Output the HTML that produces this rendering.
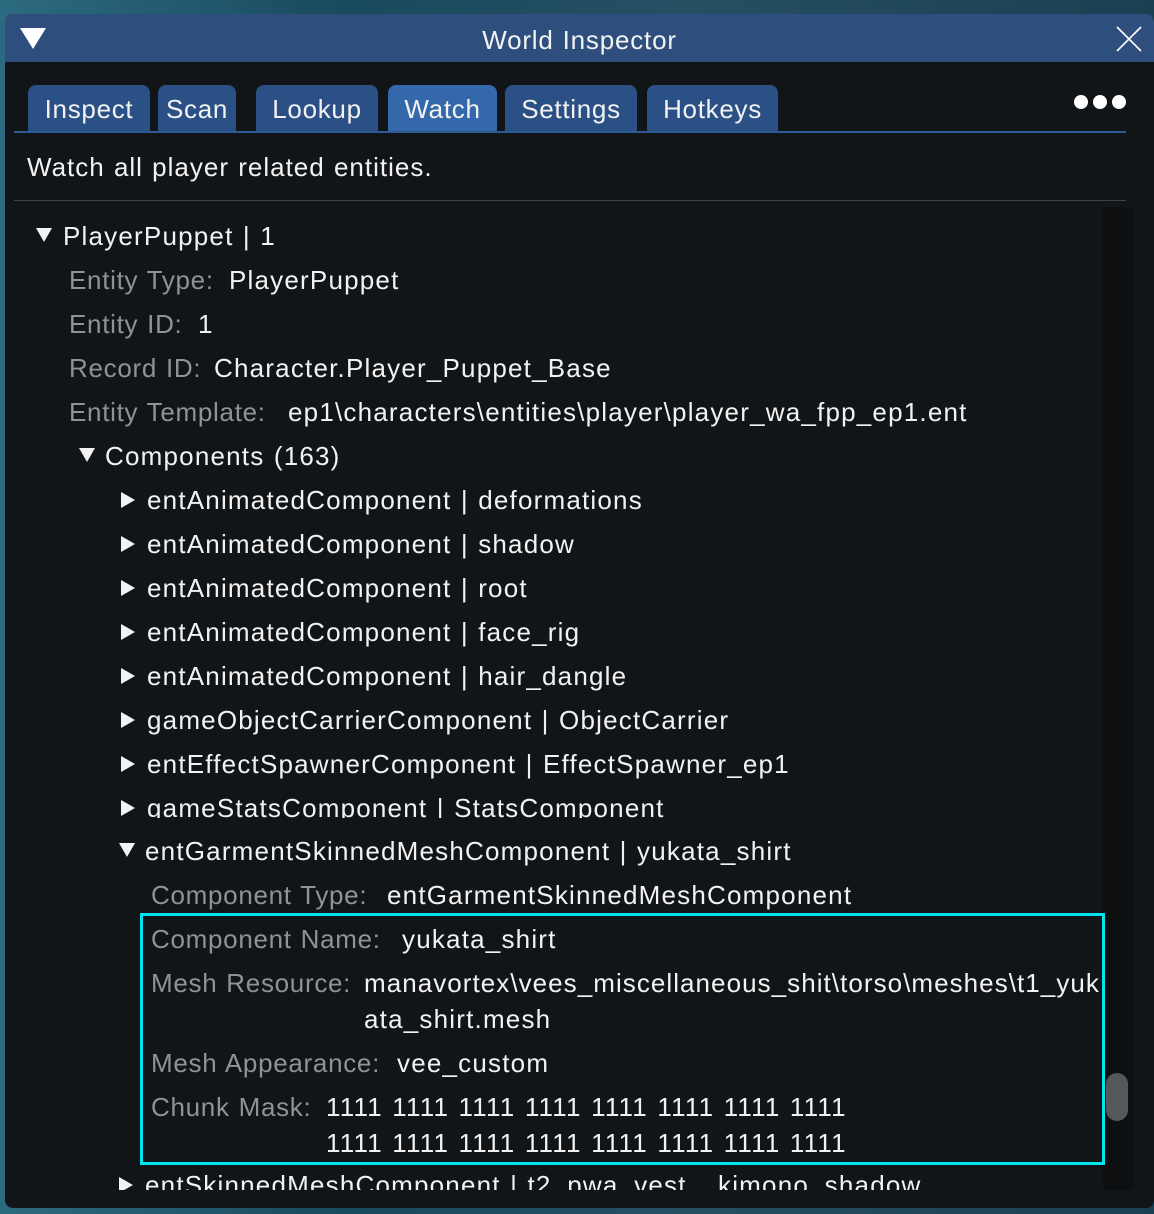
<!DOCTYPE html>
<html><head><meta charset="utf-8"><style>
*{margin:0;padding:0;box-sizing:border-box}
body{width:1154px;height:1214px;overflow:hidden;background:#1d4a5c;font-family:"Liberation Sans",sans-serif;color:#f2f2f2;position:relative}
.bg1{position:absolute;left:0;top:0;width:1154px;height:1214px;background:linear-gradient(90deg,#2c6a80 0,#1a4a5e 30%,#264f62 60%,#1a3f52 100%)}
.win{position:absolute;left:5px;top:14px;width:1149px;height:1194px;background:#121518;border-radius:8px 8px 8px 8px;overflow:hidden}
.title{position:absolute;left:0;top:0;width:100%;height:48px;background:#2e4e7e}
.r{position:absolute;white-space:pre;font-size:26px;line-height:44px;height:44px;letter-spacing:1.2px;word-spacing:1px}
.l{color:#8d9398;letter-spacing:0.7px}
.tab{position:absolute;top:71px;height:46px;background:#2b5085;border-radius:8px 8px 0 0;font-size:26px;line-height:48px;text-align:center;color:#f2f2f2;letter-spacing:0.7px}
.tri{position:absolute;width:0;height:0}
.rt{border-top:8px solid transparent;border-bottom:8px solid transparent;border-left:14px solid #f2f2f2}
.dn{border-left:8px solid transparent;border-right:8px solid transparent;border-top:14px solid #f2f2f2}
</style></head><body>
<div class="bg1"></div>
<div class="win">
 <div class="title"></div>
 <div class="tri" style="left:15px;top:14px;border-left:13px solid transparent;border-right:13px solid transparent;border-top:21px solid #fff"></div>
 <div class="r" style="left:0;width:1149px;text-align:center;top:4px;letter-spacing:0.8px">World Inspector</div>
 <svg style="position:absolute;left:1111px;top:12px" width="26" height="26"><path d="M1 1L25 25M25 1L1 25" stroke="#fff" stroke-width="1.6"/></svg>

 <div class="tab" style="left:23px;width:122px">Inspect</div>
 <div class="tab" style="left:153px;width:78px">Scan</div>
 <div class="tab" style="left:251px;width:122px">Lookup</div>
 <div class="tab" style="left:383px;width:109px;background:#3468ab">Watch</div>
 <div class="tab" style="left:500px;width:132px">Settings</div>
 <div class="tab" style="left:642px;width:131px">Hotkeys</div>
 <div style="position:absolute;left:9px;top:117px;width:1112px;height:2px;background:#2e5a94"></div>
 <div style="position:absolute;left:1069px;top:81px;width:14px;height:14px;border-radius:50%;background:#fff"></div>
 <div style="position:absolute;left:1088px;top:81px;width:14px;height:14px;border-radius:50%;background:#fff"></div>
 <div style="position:absolute;left:1107px;top:81px;width:14px;height:14px;border-radius:50%;background:#fff"></div>

 <div class="r" style="left:22px;top:131px;letter-spacing:1px">Watch all player related entities.</div>
 <div style="position:absolute;left:9px;top:186px;width:1112px;height:1px;background:#3e4248"></div>

 <div style="position:absolute;left:1098px;top:193px;width:30px;height:983px;background:#0d0f11"></div>
 <div style="position:absolute;left:1101px;top:1059px;width:22px;height:48px;border-radius:11px;background:#555759"></div>

 <div class="tri dn" style="left:31px;top:214px"></div>
 <div class="r" style="left:58px;top:200px">PlayerPuppet | 1</div>
 <div class="r l" style="left:64px;top:244px">Entity Type:</div><div class="r" style="left:224px;top:244px">PlayerPuppet</div>
 <div class="r l" style="left:64px;top:288px">Entity ID:</div><div class="r" style="left:193px;top:288px">1</div>
 <div class="r l" style="left:64px;top:332px">Record ID:</div><div class="r" style="left:209px;top:332px">Character.Player_Puppet_Base</div>
 <div class="r l" style="left:64px;top:376px">Entity Template:</div><div class="r" style="left:283px;top:376px">ep1\characters\entities\player\player_wa_fpp_ep1.ent</div>
 <div class="tri dn" style="left:74px;top:434px"></div>
 <div class="r" style="left:100px;top:420px">Components (163)</div>

 <div class="tri rt" style="left:116px;top:478px"></div><div class="r" style="left:142px;top:464px">entAnimatedComponent | deformations</div>
 <div class="tri rt" style="left:116px;top:522px"></div><div class="r" style="left:142px;top:508px">entAnimatedComponent | shadow</div>
 <div class="tri rt" style="left:116px;top:566px"></div><div class="r" style="left:142px;top:552px">entAnimatedComponent | root</div>
 <div class="tri rt" style="left:116px;top:610px"></div><div class="r" style="left:142px;top:596px">entAnimatedComponent | face_rig</div>
 <div class="tri rt" style="left:116px;top:654px"></div><div class="r" style="left:142px;top:640px">entAnimatedComponent | hair_dangle</div>
 <div class="tri rt" style="left:116px;top:698px"></div><div class="r" style="left:142px;top:684px">gameObjectCarrierComponent | ObjectCarrier</div>
 <div class="tri rt" style="left:116px;top:742px"></div><div class="r" style="left:142px;top:728px">entEffectSpawnerComponent | EffectSpawner_ep1</div>
 <div style="position:absolute;left:0;top:772px;width:1090px;height:32px;overflow:hidden">
  <div class="tri rt" style="left:116px;top:14px"></div><div class="r" style="left:142px;top:0">gameStatsComponent | StatsComponent</div>
 </div>

 <div class="tri dn" style="left:114px;top:829px"></div>
 <div class="r" style="left:140px;top:815px">entGarmentSkinnedMeshComponent | yukata_shirt</div>
 <div class="r l" style="left:146px;top:859px">Component Type:</div><div class="r" style="left:382px;top:859px">entGarmentSkinnedMeshComponent</div>

 <div style="position:absolute;left:135px;top:899px;width:965px;height:252px;border:3px solid #00e5ee"></div>
 <div class="r l" style="left:146px;top:903px">Component Name:</div><div class="r" style="left:397px;top:903px">yukata_shirt</div>
 <div class="r l" style="left:146px;top:947px">Mesh Resource:</div><div class="r" style="left:359px;top:947px;letter-spacing:1.05px">manavortex\vees_miscellaneous_shit\torso\meshes\t1_yuk</div>
 <div class="r" style="left:359px;top:983px">ata_shirt.mesh</div>
 <div class="r l" style="left:146px;top:1027px">Mesh Appearance:</div><div class="r" style="left:392px;top:1027px">vee_custom</div>
 <div class="r l" style="left:146px;top:1071px">Chunk Mask:</div><div class="r" style="left:321px;top:1071px">1111 1111 1111 1111 1111 1111 1111 1111</div>
 <div class="r" style="left:321px;top:1107px">1111 1111 1111 1111 1111 1111 1111 1111</div>

 <div style="position:absolute;left:0;top:1155px;width:1090px;height:21px;overflow:hidden">
  <div class="tri rt" style="left:114px;top:8px"></div><div class="r" style="left:140px;top:-6px">entSkinnedMeshComponent | t2_pwa_vest__kimono_shadow</div>
 </div>
</div>
</body></html>
